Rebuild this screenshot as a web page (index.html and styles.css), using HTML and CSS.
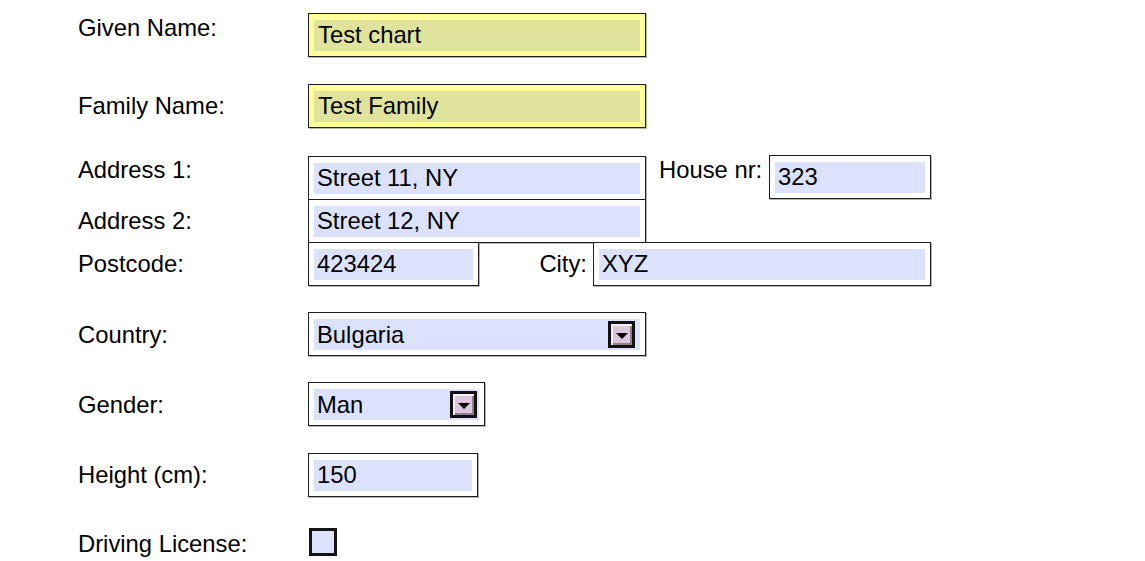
FILE: index.html
```html
<!DOCTYPE html>
<html>
<head>
<meta charset="utf-8">
<title>Form</title>
<link rel="stylesheet" href="styles.css">
</head>
<body>
<form class="form">
  <div class="row row-top r-given">
    <label class="lbl lbl-given">Given Name:</label>
    <div class="field field-yellow w-full"><div class="inner">Test chart</div></div>
  </div>

  <div class="row r-family">
    <label class="lbl">Family Name:</label>
    <div class="field field-yellow w-full"><div class="inner">Test Family</div></div>
  </div>

  <div class="address">
    <div class="row row-top">
      <label class="lbl">Address 1:</label>
      <div class="field w-full"><div class="inner">Street 11, NY</div></div>
      <label class="lbl-mid house-lbl">House nr:</label>
      <div class="field w-house house-box"><div class="inner">323</div></div>
    </div>
    <div class="row stacked">
      <label class="lbl">Address 2:</label>
      <div class="field w-full"><div class="inner">Street 12, NY</div></div>
    </div>
    <div class="row stacked">
      <label class="lbl">Postcode:</label>
      <div class="field w-post"><div class="inner">423424</div></div>
      <label class="lbl-mid city-lbl">City:</label>
      <div class="field w-full"><div class="inner">XYZ</div></div>
    </div>
  </div>

  <div class="row r-country">
    <label class="lbl">Country:</label>
    <div class="field w-full">
      <div class="inner select">
        <span class="sel-text">Bulgaria</span>
        <span class="sel-btn"><span class="tri"></span></span>
      </div>
    </div>
  </div>

  <div class="row r-gender">
    <label class="lbl">Gender:</label>
    <div class="field w-gender">
      <div class="inner select select-tight">
        <span class="sel-text">Man</span>
        <span class="sel-btn"><span class="tri"></span></span>
      </div>
    </div>
  </div>

  <div class="row r-height">
    <label class="lbl">Height (cm):</label>
    <div class="field w-height"><div class="inner">150</div></div>
  </div>

  <div class="row row-top r-license">
    <label class="lbl lbl-check">Driving License:</label>
    <span class="check"></span>
  </div>
</form>
</body>
</html>
```

FILE: styles.css
```css
html, body {
  margin: 0;
  padding: 0;
  background: #ffffff;
}

body {
  font-family: "Liberation Sans", Arial, sans-serif;
  font-size: 23.8px;
  color: #000;
}

.form {
  display: flex;
  flex-direction: column;
  padding: 13px 0 0 78px;
}

.row {
  display: flex;
  align-items: baseline;
}

.row-top {
  align-items: flex-start;
}

.lbl {
  flex: none;
  width: 230px;
  line-height: 27px;
  white-space: nowrap;
}

.lbl-given {
  padding-top: 1px;
}

.lbl-mid {
  flex: none;
  line-height: 27px;
  white-space: nowrap;
  box-sizing: border-box;
}

.house-lbl {
  width: 123px;
  padding-left: 13px;
}

.house-box {
  margin-top: -1px;
}

.city-lbl {
  width: 114px;
  padding-right: 6px;
  text-align: right;
}

.r-family { margin-top: 27px; }
.address { margin-top: 28px; display: flex; flex-direction: column; }
.stacked { margin-top: -1px; }
.r-country { margin-top: 26px; }
.r-gender { margin-top: 26px; }
.r-height { margin-top: 27px; }
.r-license { margin-top: 31px; }

.field {
  flex: none;
  box-sizing: border-box;
  height: 44px;
  border: 1px solid #1e1e1e;
  padding: 6px 5px 5px 5px;
  background: #ffffff;
  box-shadow: 1px 1px 0 #b4b4b4;
}

.w-full { width: 338px; }
.w-post { width: 171px; }
.w-house { width: 162px; }
.w-gender { width: 177px; }
.w-height { width: 170px; }

.inner {
  height: 31px;
  line-height: 30px;
  padding-left: 3px;
  background: #dce2fe;
  white-space: nowrap;
  overflow: hidden;
}

.field-yellow {
  background: #ffff9a;
}

.field-yellow .inner {
  background: #dfe39b;
  padding-left: 4px;
}

.select {
  display: flex;
  align-items: center;
  justify-content: space-between;
  padding-right: 5px;
}

.select-tight {
  padding-right: 2px;
}

.sel-btn {
  flex: none;
  box-sizing: border-box;
  width: 27px;
  height: 27px;
  border: 3px solid #111;
  background: #dcc6dc;
  box-shadow: inset 2px 2px 0 #f6eef6, inset -2px -2px 0 #8e7f8e;
  display: flex;
  align-items: center;
  justify-content: center;
}

.tri {
  width: 0;
  height: 0;
  border-left: 6px solid transparent;
  border-right: 6px solid transparent;
  border-top: 6px solid #000;
  margin-top: 2px;
}

.lbl-check {
  padding-top: 2px;
}

.check {
  flex: none;
  box-sizing: border-box;
  width: 28px;
  height: 28px;
  margin-left: 1px;
  border: 3px solid #151515;
  background: #dde3ff;
}
```
